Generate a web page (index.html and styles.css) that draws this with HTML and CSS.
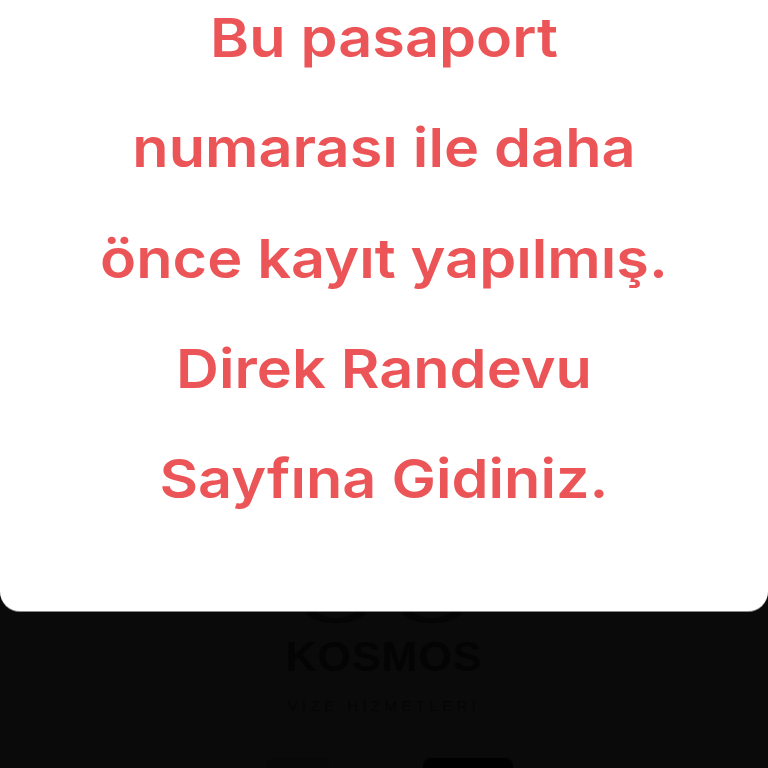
FILE: index.html
```html
<!DOCTYPE html>
<html lang="tr">
<head>
    <meta charset="UTF-8">
    <meta name="viewport" content="width=device-width, initial-scale=1.0">
    <title>Kosmos</title>
    <link rel="stylesheet" href="styles.css">
</head>
<body>
    <div class="page">
        <div class="logo-marks">
            <svg class="logo-mark" width="66" height="16" viewBox="0 0 66 16"><path d="M2 1 C14 16 52 16 64 1 L52 1 C44 9 22 9 14 1 Z"/></svg>
            <svg class="logo-mark" width="66" height="16" viewBox="0 0 66 16"><path d="M2 1 C14 16 52 16 64 1 L52 1 C44 9 22 9 14 1 Z"/></svg>
        </div>
        <div class="logo-name">KOSMOS</div>
        <div class="logo-sub">VİZE HİZMETLERİ</div>
        <div class="page-buttons">
            <div class="page-btn page-btn-small"></div>
            <div class="page-btn page-btn-wide"></div>
        </div>
    </div>

    <div class="modal">
        <p class="modal-text">Bu pasaport<br>numarası ile daha<br>önce kayıt yapılmış.<br>Direk Randevu<br>Sayfına Gidiniz.</p>
    </div>
</body>
</html>
```

FILE: styles.css
```css
html, body {
    margin: 0;
    padding: 0;
}
body {
    width: 768px;
    height: 768px;
    overflow: hidden;
    position: relative;
    background-color: #0a0a0a;
    font-family: Inter, "Noto Sans", sans-serif;
}
.page {
    display: flex;
    flex-direction: column;
    align-items: center;
    padding-top: 611px;
}
.logo-marks {
    display: flex;
    gap: 30px;
    height: 16px;
}
.logo-mark {
    fill: #050505;
}
.logo-name {
    margin-top: 7px;
    height: 44px;
    line-height: 44px;
    font-family: "Liberation Sans", sans-serif;
    font-size: 43px;
    font-weight: 700;
    letter-spacing: 1px;
    color: #040404;
}
.logo-sub {
    margin-top: 18px;
    height: 20px;
    line-height: 20px;
    font-family: "Liberation Sans", sans-serif;
    font-size: 15px;
    letter-spacing: 4.4px;
    color: #050505;
}
.page-buttons {
    display: flex;
    gap: 93px;
    margin-top: 42px;
    padding-left: 12px;
}
.page-btn {
    height: 12px;
    border-radius: 8px 8px 0 0;
    background-color: #080808;
}
.page-btn-small {
    width: 63px;
}
.page-btn-wide {
    width: 90px;
    background-color: #000;
}
.modal {
    position: absolute;
    top: 0;
    left: 0;
    right: 0;
    height: 611px;
    background-color: #fff;
    border-radius: 0 0 20px 20px;
    box-shadow: 0 1px 0 #8a8a8a;
}
.modal-text {
    margin: 0;
    text-align: center;
    font-size: 54px;
    line-height: 110.25px;
    font-weight: 600;
    color: #ec5558;
    position: relative;
    top: -17px;
    transform: scaleX(1.1);
}
```
